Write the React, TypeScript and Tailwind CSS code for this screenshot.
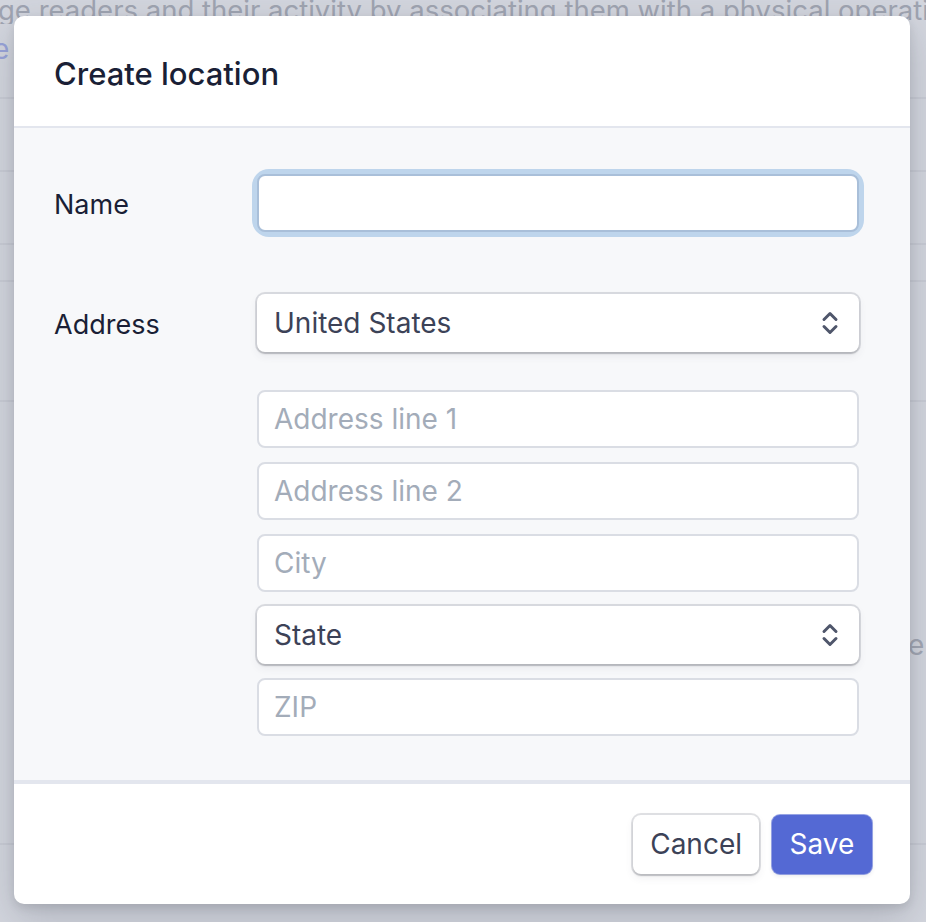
import React from "react";

function Chevrons() {
  return (
    <svg width="18" height="26" viewBox="0 0 18 26" fill="none" className="shrink-0">
      <path d="M3 9.5 L9 3.5 L15 9.5" stroke="#4f566b" strokeWidth="3" strokeLinecap="round" strokeLinejoin="round" />
      <path d="M3 16.5 L9 22.5 L15 16.5" stroke="#4f566b" strokeWidth="3" strokeLinecap="round" strokeLinejoin="round" />
    </svg>
  );
}

const inputCls =
  "w-full h-[58px] rounded-[8px] bg-white border-2 border-[#dadde4] px-[15px] text-[28px] text-[#3c4257] placeholder:text-[#a3acb9] outline-none";

function Select({ label }: { label: string }) {
  return (
    <div className="w-full h-[58px] rounded-[8px] bg-white flex items-center justify-between pl-[17px] pr-[20px] shadow-[0_0_0_2px_rgba(60,66,87,0.16),0_4px_8px_rgba(60,66,87,0.08),0_2px_2px_rgba(0,0,0,0.14)]">
      <span className="text-[28px] text-[#3c4257] leading-none">{label}</span>
      <Chevrons />
    </div>
  );
}

export default function App() {
  return (
    <div
      className="relative w-[926px] h-[922px] overflow-hidden bg-[#d3d6de]"
      style={{ fontFamily: "Inter, 'Noto Sans', sans-serif" }}
    >
      {/* page behind the overlay */}
      <div className="flex flex-col">
        <div className="h-[24px] overflow-hidden relative">
          <div className="absolute left-[-2px] top-[-10px] whitespace-nowrap text-[27.5px] text-[#9fa4b1]">
            ge readers and their activity by associating them with a physical operating
          </div>
        </div>
        <div className="h-[73px] relative">
          <span className="absolute left-[-7px] top-[4px] text-[28px] text-[#98a3d8]">e</span>
        </div>
        <div className="h-[2px] bg-[#c9ccd5]" />
        <div className="h-[71px]" />
        <div className="h-[2px] bg-[#c9ccd5]" />
        <div className="h-[71px]" />
        <div className="h-[2px] bg-[#c9ccd5]" />
        <div className="h-[35px]" />
        <div className="h-[2px] bg-[#c9ccd5]" />
        <div className="h-[118px]" />
        <div className="h-[2px] bg-[#c9ccd5]" />
        <div className="h-[230px] relative">
          <span className="absolute left-[908px] top-[222px] text-[28px] text-[#a2a7b3]">e</span>
        </div>
        <div className="h-[211px]" />
        <div className="h-[2px] bg-[#c9ccd5]" />
      </div>

      {/* modal */}
      <div className="absolute left-[14px] top-[16px] w-[896px] h-[888px] rounded-[10px] bg-white overflow-hidden flex flex-col shadow-[0_14px_40px_rgba(50,55,75,0.22),0_4px_10px_rgba(0,0,0,0.10)]">
        <div className="h-[112px] flex items-center pl-[40px] pt-[4px] border-b-2 border-[#e3e6ee] shrink-0">
          <h1 className="text-[31px] font-medium text-[#1a1f36] leading-none">Create location</h1>
        </div>

        <div className="flex-1 bg-[#f7f8fa] pt-[46px] pl-[40px] pr-[51px] flex flex-col">
          <div className="flex items-center">
            <div className="w-[203px] shrink-0 pt-[4px] text-[27px] text-[#1a1f36]">Name</div>
            <div className="flex-1 rounded-[12px] shadow-[0_0_0_5px_#bed5ec]">
              <input className="w-full h-[58px] rounded-[8px] bg-white border-2 border-[#a9bfd9] px-[15px] text-[28px] text-[#3c4257] outline-none" />
            </div>
          </div>

          <div className="flex items-center mt-[62px]">
            <div className="w-[203px] shrink-0 pt-[4px] text-[27px] text-[#1a1f36]">Address</div>
            <div className="flex-1">
              <Select label="United States" />
            </div>
          </div>

          <div className="ml-[203px] mt-[38px] flex flex-col gap-[14px]">
            <input className={inputCls} placeholder="Address line 1" />
            <input className={inputCls} placeholder="Address line 2" />
            <input className={inputCls} placeholder="City" />
            <Select label="State" />
            <input className={inputCls} placeholder="ZIP" />
          </div>
        </div>

        <div className="h-[124px] shrink-0 border-t-[4px] border-[#e3e6ee] flex items-center justify-end gap-[13px] pr-[38px]">
          <button className="h-[59px] px-[17px] rounded-[8px] bg-white text-[28px] text-[#3c4257] shadow-[0_0_0_2px_rgba(60,66,87,0.16),0_4px_8px_rgba(60,66,87,0.08),0_2px_2px_rgba(0,0,0,0.14)]">
            Cancel
          </button>
          <button className="h-[59px] w-[100px] rounded-[8px] bg-[#5469d4] text-[28px] text-white shadow-[0_0_0_1px_rgba(84,105,212,0.6),0_2px_4px_rgba(60,66,87,0.12)]">
            Save
          </button>
        </div>
      </div>
    </div>
  );
}
